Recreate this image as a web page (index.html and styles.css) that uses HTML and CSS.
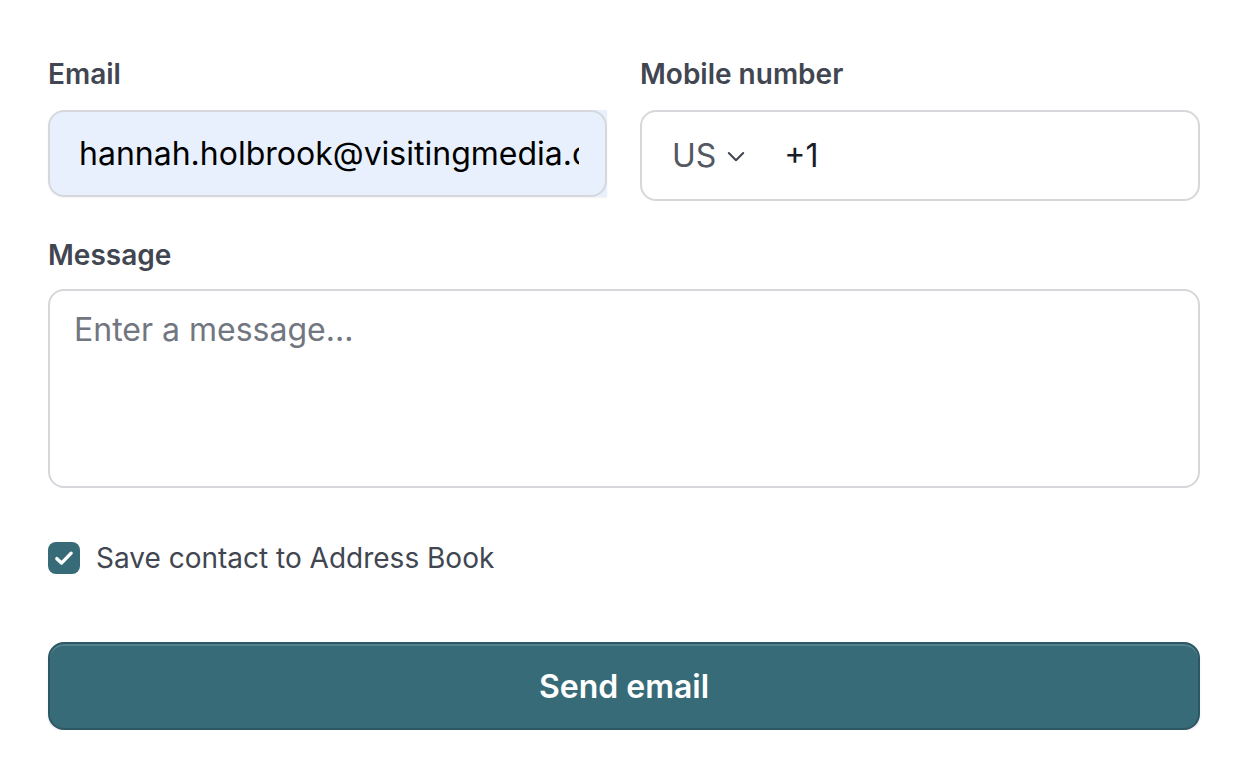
FILE: index.html
```html
<!DOCTYPE html>
<html lang="en">
<head>
<meta charset="utf-8">
<title>Send email</title>
<link rel="stylesheet" href="styles.css">
</head>
<body>
<form class="form">
  <div class="row">
    <div class="field">
      <label class="label">Email</label>
      <div class="input input-autofill">
        <span class="value">hannah.holbrook@visitingmedia.com</span>
      </div>
    </div>
    <div class="field">
      <label class="label">Mobile number</label>
      <div class="input input-phone">
        <span class="country">US
          <svg class="chevron" viewBox="0 0 20 20" width="24" height="24" aria-hidden="true">
            <path d="M4 7.5l6 6 6-6" fill="none" stroke="currentColor" stroke-width="1.7" stroke-linecap="round" stroke-linejoin="round"/>
          </svg>
        </span>
        <span class="value">+1</span>
      </div>
    </div>
  </div>

  <div class="field field-message">
    <label class="label label-message">Message</label>
    <div class="textarea"><span class="placeholder">Enter a message...</span></div>
  </div>

  <label class="check">
    <span class="box">
      <svg viewBox="0 0 20 20" width="26" height="26" aria-hidden="true">
        <path d="M4.5 10.5l3.6 3.4 7.4-7.6" fill="none" stroke="#fff" stroke-width="2.6" stroke-linecap="round" stroke-linejoin="round"/>
      </svg>
    </span>
    <span class="check-text">Save contact to Address Book</span>
  </label>

  <button type="button" class="button">Send email</button>
</form>
</body>
</html>
```

FILE: styles.css
```css
* { box-sizing: border-box; }

html, body {
  margin: 0;
  background: #ffffff;
}

body {
  font-family: Inter, "Noto Sans", sans-serif;
  color: #181d27;
}

.form {
  width: 1152px;
  margin-left: 48px;
  padding-top: 54px;
  display: flex;
  flex-direction: column;
}

.row {
  display: grid;
  grid-template-columns: 1fr 1fr;
  column-gap: 32px;
  align-items: start;
}

.field {
  display: flex;
  flex-direction: column;
}

.label {
  font-size: 28px;
  line-height: 40px;
  font-weight: 600;
  color: #414651;
  margin-bottom: 16px;
}

.label-message {
  margin-bottom: 14px;
}

.input {
  position: relative;
  display: flex;
  align-items: center;
  height: 91px;
  padding: 0 30px;
  border: 2px solid #d5d7da;
  border-radius: 16px;
  background: #ffffff;
  font-size: 32px;
  white-space: nowrap;
}

/* browser autofill tint: square on the right, the rounded border drawn on top */
.input-autofill {
  width: 559px;
  height: 87px;
  border: none;
  padding-left: 31px;
  padding-right: 28px;
  background: #e8f0fe;
  border-radius: 16px 0 0 16px;
  overflow: hidden;
  box-shadow: 0 1px 2px rgba(10, 13, 18, 0.05);
}

.input-autofill::after {
  content: "";
  position: absolute;
  inset: 0;
  border: 2px solid #d5d7da;
  border-radius: 16px;
  pointer-events: none;
}

.input-autofill .value {
  display: block;
  overflow: hidden;
  width: 100%;
  color: #000000;
}

.country {
  display: inline-flex;
  align-items: center;
  color: #535862;
  gap: 8px;
  margin-right: 36px;
}

.chevron {
  color: #414651;
  margin-top: 1px;
}

.field-message {
  margin-top: 34px;
}

.textarea {
  height: 199px;
  border: 2px solid #d5d7da;
  border-radius: 16px;
  padding: 15px 24px;
  font-size: 32px;
  line-height: 48px;
}

.placeholder {
  color: #717680;
}

.check {
  display: flex;
  align-items: center;
  gap: 16px;
  margin-top: 54px;
}

.box {
  width: 32px;
  height: 32px;
  border-radius: 8px;
  background: #386b78;
  display: flex;
  align-items: center;
  justify-content: center;
}

.check-text {
  font-size: 28px;
  line-height: 32px;
  color: #414651;
}

.button {
  margin-top: 68px;
  height: 88px;
  width: 100%;
  border: 2px solid #2c5866;
  border-radius: 16px;
  background: #386b78;
  color: #ffffff;
  font-family: inherit;
  font-size: 32px;
  font-weight: 600;
  box-shadow: inset 0 2px 0 rgba(255, 255, 255, 0.14), 0 1px 2px rgba(10, 13, 18, 0.1);
  cursor: pointer;
}
```
